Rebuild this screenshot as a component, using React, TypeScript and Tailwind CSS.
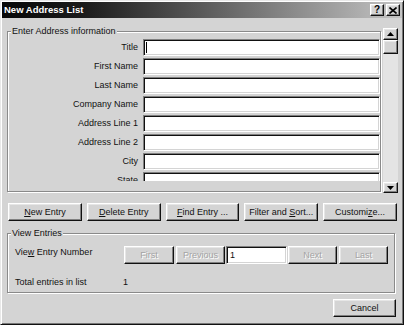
import React from "react";

const raised =
  "bg-[#d4d4d4] border border-t-white border-l-white border-b-[#111] border-r-[#111] shadow-[inset_-1px_-1px_0_#808080,inset_1px_1px_0_#e6e6e6] flex items-center justify-center";
const sunken =
  "bg-white border border-t-[#808080] border-l-[#808080] border-b-white border-r-white shadow-[inset_1px_1px_0_#111,inset_-1px_-1px_0_#d4d4d4]";
const etched =
  "relative border border-[#8a8a8a] shadow-[inset_1px_1px_0_#fff,1px_1px_0_#fff]";

function Btn({ children, className = "" }: { children: React.ReactNode; className?: string }) {
  return <div className={`${raised} h-[18px] ${className}`}>{children}</div>;
}

function DisBtn({ label, className = "" }: { label: string; className?: string }) {
  return (
    <div className={`${raised} h-[18px] text-[#a4a4a4] [text-shadow:1px_1px_0_#fff] ${className}`}>{label}</div>
  );
}

function Tri({ down = false }: { down?: boolean }) {
  return (
    <svg width="7" height="4" viewBox="0 0 7 4">
      {down ? <polygon points="0,0 7,0 3.5,4" fill="#000" /> : <polygon points="0,4 7,4 3.5,0" fill="#000" />}
    </svg>
  );
}

const fields = [
  "Title",
  "First Name",
  "Last Name",
  "Company Name",
  "Address Line 1",
  "Address Line 2",
  "City",
  "State",
];

export default function App() {
  return (
    <div className="w-[404px] h-[325px] bg-[#d4d4d4] border border-t-[#e8e8e8] border-l-[#e8e8e8] border-b-[#111] border-r-[#111] shadow-[inset_1px_1px_0_#fff,inset_-1px_-1px_0_#777] p-[1px] font-['Liberation_Sans',Arial,sans-serif] text-[9px] leading-[11px] text-[#111] flex flex-col overflow-hidden">
      {/* Title bar */}
      <div className="h-[16px] shrink-0 flex items-center bg-[linear-gradient(to_right,#080808_0%,#1a1a1a_20%,#c4c4c4_100%)] pl-[2px] pr-[2px]">
        <span className="text-white font-bold text-[9.5px] leading-[12px]">New Address List</span>
        <div className="ml-auto flex gap-[2px]">
          <div className={`${raised} w-[14px] h-[12px] font-bold text-[10px] leading-[10px] text-black`}>?</div>
          <div className={`${raised} w-[14px] h-[12px]`}>
            <svg width="8" height="7" viewBox="0 0 8 7">
              <path d="M0.5 0.5 L7.5 6.5 M7.5 0.5 L0.5 6.5" stroke="#000" strokeWidth="1.6" />
            </svg>
          </div>
        </div>
      </div>

      {/* Address entry area */}
      <div className="flex items-start shrink-0">
        <div className={`${etched} ml-[5px] mt-[13px] w-[374px] h-[161px]`}>
          <span className="absolute left-[3px] -top-[6px] bg-[#d4d4d4] px-[1px]">Enter Address information</span>
          <div className="h-[149px] overflow-hidden pt-[7px] flex flex-col gap-[2px]">
            {fields.map((f, i) => (
              <div key={f} className="h-[17px] shrink-0 flex items-center">
                <div className="w-[130px] text-right">{f}</div>
                <div className={`${sunken} ml-[5px] flex-1 h-[17px] flex items-center`}>
                  {i === 0 && <div className="ml-[2px] w-[1px] h-[11px] bg-black" />}
                </div>
              </div>
            ))}
          </div>
        </div>
        <div className="ml-[2px] mt-[10px] w-[15px] h-[165px] flex flex-col">
          <div className={`${raised} h-[12px] shrink-0`}>
            <Tri />
          </div>
          <div className={`${raised} h-[14px] shrink-0`} />
          <div className="flex-1 bg-[#e4e4e4]" />
          <div className={`${raised} h-[11px] shrink-0`}>
            <Tri down />
          </div>
        </div>
      </div>

      {/* Action buttons */}
      <div className="ml-[6px] mt-[10px] w-[389px] flex gap-[5px] shrink-0">
        <Btn className="flex-1">
          <span>
            <span className="underline">N</span>ew Entry
          </span>
        </Btn>
        <Btn className="flex-1">
          <span>
            <span className="underline">D</span>elete Entry
          </span>
        </Btn>
        <Btn className="flex-1">
          <span>
            <span className="underline">F</span>ind Entry ...
          </span>
        </Btn>
        <Btn className="flex-1">
          <span>
            Filter and <span className="underline">S</span>ort...
          </span>
        </Btn>
        <Btn className="flex-1">
          <span>
            Customi<span className="underline">z</span>e...
          </span>
        </Btn>
      </div>

      {/* View entries */}
      <div className={`${etched} ml-[5px] mt-[12px] w-[388px] h-[60px] shrink-0`}>
        <span className="absolute left-[3px] -top-[6px] bg-[#d4d4d4] px-[1px]">View Entries</span>
        <div className="pl-[7px] pt-[12px] flex items-start">
          <div className="w-[109px] pt-[1px]">
            Vie<span className="underline">w</span> Entry Number
          </div>
          <DisBtn label="First" className="w-[50px]" />
          <DisBtn label="Previous" className="ml-[2px] w-[49px]" />
          <div className={`${sunken} ml-[1px] w-[61px] h-[18px] flex items-center pl-[3px]`}>1</div>
          <DisBtn label="Next" className="ml-[1px] w-[49px]" />
          <DisBtn label="Last" className="ml-[2px] w-[49px]" />
        </div>
        <div className="pl-[7px] mt-[13px] flex">
          <div className="w-[108px]">Total entries in list</div>
          <div>1</div>
        </div>
      </div>

      {/* Cancel */}
      <div className="flex justify-end mt-[6px] mr-[6px] shrink-0">
        <Btn className="w-[63px] h-[17px]">Cancel</Btn>
      </div>
    </div>
  );
}
